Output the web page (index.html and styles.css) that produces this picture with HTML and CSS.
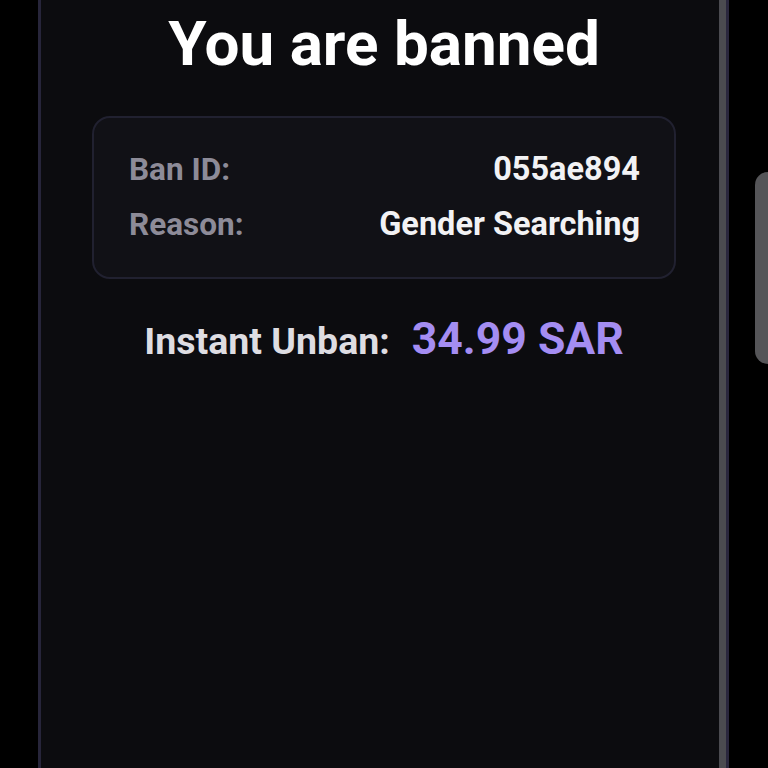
FILE: index.html
```html
<!DOCTYPE html>
<html lang="en">
<head>
    <meta charset="UTF-8">
    <meta name="viewport" content="width=device-width, initial-scale=1.0">
    <title>You are banned</title>
    <link rel="stylesheet" href="styles.css">
</head>
<body>
    <div class="screen">
        <div class="panel">
            <div class="content">
                <h1 class="title">You are banned</h1>
                <div class="ban-card">
                    <div class="ban-row">
                        <span class="ban-label">Ban ID:</span>
                        <span class="ban-value">055ae894</span>
                    </div>
                    <div class="ban-row">
                        <span class="ban-label">Reason:</span>
                        <span class="ban-value">Gender Searching</span>
                    </div>
                </div>
                <div class="unban">
                    <span class="unban-label">Instant Unban:</span>
                    <span class="unban-price">34.99 SAR</span>
                </div>
            </div>
            <div class="scrollbar"></div>
        </div>
        <div class="side-button"></div>
    </div>
</body>
</html>
```

FILE: styles.css
```css
body {
    margin: 0;
    background-color: #000000;
    font-family: Roboto, "Liberation Sans", Arial, sans-serif;
    color: #ffffff;
    overflow: hidden;
}

.screen {
    display: flex;
    height: 100vh;
}

.panel {
    display: flex;
    width: 691px;
    margin-left: 38px;
    box-sizing: border-box;
    background-color: #0c0c0f;
    border-left: 3px solid #27253a;
    border-right: 3px solid #2a273d;
}

.content {
    flex: 1;
    padding: 0 43px 0 51px;
}

.scrollbar {
    width: 7px;
    background-color: #4b4b50;
}

.side-button {
    width: 13px;
    height: 192px;
    margin-top: 172px;
    margin-left: auto;
    background-color: #555558;
    border-radius: 14px 0 0 14px;
}

.title {
    margin: 6px 0 0;
    font-size: 62px;
    line-height: 76px;
    font-weight: bold;
    text-align: center;
    color: #ffffff;
}

.ban-card {
    margin-top: 34px;
    padding: 24px 34px 25px 35px;
    background-color: #111116;
    border: 2px solid #212130;
    border-radius: 18px;
}

.ban-row {
    display: flex;
    justify-content: space-between;
    align-items: baseline;
    line-height: 54px;
    font-weight: bold;
}

.ban-label {
    font-size: 31.5px;
    color: #8d8b98;
}

.ban-value {
    font-size: 32.5px;
    color: #f2f2f4;
}

.unban {
    display: flex;
    justify-content: center;
    align-items: baseline;
    gap: 22px;
    margin-top: 34px;
    font-weight: bold;
}

.unban-label {
    font-size: 37.5px;
    color: #dedde2;
}

.unban-price {
    font-size: 44.5px;
    color: #a48df2;
}
```
